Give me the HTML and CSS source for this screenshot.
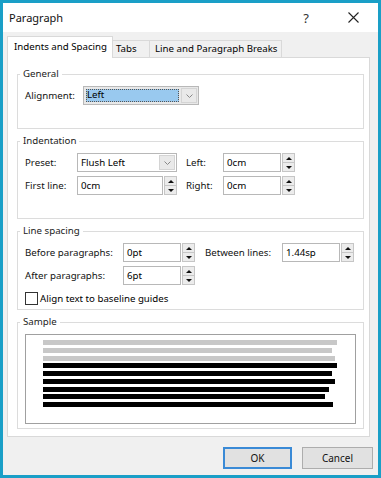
FILE: index.html
```html
<!DOCTYPE html>
<html>
<head>
<meta charset="utf-8">
<title>Paragraph</title>
<link rel="stylesheet" href="styles.css">
</head>
<body>
<div class="window">
  <div class="titlebar">
    <span class="title">Paragraph</span>
    <span class="help">?</span>
    <span class="close"><svg width="11" height="11" viewBox="0 0 11 11"><path d="M0.5 0.5L10.5 10.5M10.5 0.5L0.5 10.5" stroke="#222" stroke-width="1.1" fill="none"/></svg></span>
  </div>
  <div class="body">
    <div class="tabs">
      <div class="tab active">Indents and Spacing</div>
      <div class="tab tab-tabs">Tabs</div>
      <div class="tab tab-breaks">Line and Paragraph Breaks</div>
    </div>
    <div class="panel">
      <fieldset class="group">
        <legend>General</legend>
        <div class="gbody gen">
          <div class="row">
            <span class="lbl lbl-align">Alignment:</span>
            <div class="combo focused w-align">
              <span class="combo-text">Left</span>
              <span class="combo-btn"><svg width="7" height="4" viewBox="0 0 7 4"><path d="M0.5 0.5L3.5 3.5L6.5 0.5" stroke="#888" fill="none"/></svg></span>
            </div>
          </div>
        </div>
      </fieldset>

      <fieldset class="group">
        <legend>Indentation</legend>
        <div class="gbody ind">
          <div class="grid grid-ind">
            <span class="lbl">Preset:</span>
            <div class="combo w-preset">
              <span class="combo-text">Flush Left</span>
              <span class="combo-btn"><svg width="7" height="4" viewBox="0 0 7 4"><path d="M0.5 0.5L3.5 3.5L6.5 0.5" stroke="#888" fill="none"/></svg></span>
            </div>
            <span class="lbl">Left:</span>
            <div class="spinbox w-small">
              <span class="input">0cm</span>
              <span class="spin"><span class="up"></span><span class="down"></span></span>
            </div>
            <span class="lbl">First line:</span>
            <div class="spinbox w-preset">
              <span class="input">0cm</span>
              <span class="spin"><span class="up"></span><span class="down"></span></span>
            </div>
            <span class="lbl">Right:</span>
            <div class="spinbox w-small">
              <span class="input">0cm</span>
              <span class="spin"><span class="up"></span><span class="down"></span></span>
            </div>
          </div>
        </div>
      </fieldset>

      <fieldset class="group">
        <legend>Line spacing</legend>
        <div class="gbody ls">
          <div class="grid grid-ls">
            <span class="lbl">Before paragraphs:</span>
            <div class="spinbox w-small">
              <span class="input">0pt</span>
              <span class="spin"><span class="up"></span><span class="down"></span></span>
            </div>
            <span class="lbl">Between lines:</span>
            <div class="spinbox w-small">
              <span class="input">1.44sp</span>
              <span class="spin"><span class="up"></span><span class="down"></span></span>
            </div>
            <span class="lbl">After paragraphs:</span>
            <div class="spinbox w-small">
              <span class="input">6pt</span>
              <span class="spin"><span class="up"></span><span class="down"></span></span>
            </div>
          </div>
          <div class="check-row">
            <span class="checkbox"></span>
            <span class="check-label">Align text to baseline guides</span>
          </div>
        </div>
      </fieldset>

      <fieldset class="group">
        <legend>Sample</legend>
        <div class="gbody smp">
          <div class="sample">
            <div class="ln gray" style="width:294px"></div>
            <div class="ln gray" style="width:289px"></div>
            <div class="ln gray" style="width:292px"></div>
            <div class="ln dark" style="width:294px"></div>
            <div class="ln dark" style="width:289px"></div>
            <div class="ln dark" style="width:292px"></div>
            <div class="ln dark" style="width:286px"></div>
            <div class="ln dark" style="width:282px"></div>
            <div class="ln dark" style="width:290px"></div>
          </div>
        </div>
      </fieldset>
    </div>
    <div class="buttons">
      <button class="btn btn-ok">OK</button>
      <button class="btn btn-cancel">Cancel</button>
    </div>
  </div>
</div>
</body>
</html>
```

FILE: styles.css
```css
* { box-sizing: border-box; }
html, body { margin: 0; padding: 0; }
body {
  width: 381px;
  height: 478px;
  font-family: "Noto Sans", "Open Sans", sans-serif;
  font-size: 9.7px;
  color: #000;
  background: #fff;
}
.window {
  width: 381px;
  height: 478px;
  border: 3px solid #1a9fc7;
  display: flex;
  flex-direction: column;
  background: #f0f0f0;
}
.titlebar {
  height: 29px;
  flex: none;
  background: #fff;
  display: flex;
  align-items: center;
  padding-left: 6px;
}
.title { flex: 1; font-size: 11px; color: #111; }
.help { width: 20px; text-align: center; font-size: 13px; color: #333; margin-right: 22px; }
.close { width: 30px; display: flex; justify-content: center; margin-right: 10px; }

.body {
  flex: 1;
  display: flex;
  flex-direction: column;
  padding: 4px 8px 0 4px;
}
.tabs { display: flex; align-items: flex-end; height: 21px; flex: none; }
.tab {
  height: 17px;
  border: 1px solid #d9d9d9;
  border-bottom: none;
  background: #f0f0f0;
  line-height: 15px;
  white-space: nowrap;
}
.tab.active {
  position: relative;
  z-index: 1;
  width: 106px;
  height: 22px;
  margin-bottom: -1px;
  background: #fff;
  line-height: 19px;
  padding-left: 6px;
}
.tab-tabs { width: 37px; padding-left: 3px; border-left: none; }
.tab-breaks { width: 133px; padding-left: 5px; margin-left: -1px; }

.panel {
  height: 380px;
  flex: none;
  background: #fff;
  border: 1px solid #d9d9d9;
  padding: 9px 5px 8px 9px;
  display: flex;
  flex-direction: column;
  gap: 5px;
}
.group {
  margin: 0;
  padding: 0;
  border: 1px solid #dcdcdc;
  min-width: 0;
}
.group legend {
  margin-left: 2px;
  padding: 0 3px;
  height: 14px;
  line-height: 14px;
  color: #222;
}
.gbody { padding-left: 7px; }
.gen { padding-top: 5px; padding-bottom: 23px; }
.ind { padding-top: 5px; padding-bottom: 23px; }
.ls { padding-top: 5px; padding-bottom: 4px; }
.smp { padding-top: 5px; padding-bottom: 4px; }

.row { display: flex; align-items: center; height: 19px; }
.lbl { display: flex; align-items: center; height: 19px; white-space: nowrap; color: #111; }
.lbl-align { width: 58px; }

.grid { display: grid; row-gap: 4px; grid-auto-rows: 19px; }
.grid-ind { grid-template-columns: 52px 109px 37px 71px; }
.grid-ls { grid-template-columns: 98px 82px 77px 72px; }

.combo {
  display: flex;
  height: 19px;
  border: 1px solid #b8b8b8;
  background: #fff;
}
.w-align { width: 116px; }
.w-preset { width: 100px; }
.w-small { width: 72px; }
.combo-text { flex: 1; padding-left: 3px; line-height: 17px; }
.combo-btn {
  width: 16px;
  margin: 1px;
  background: #e9e9e9;
  border: 1px solid #d4d4d4;
  display: flex;
  align-items: center;
  justify-content: center;
}
.combo.focused { background: #e8e8e8; }
.combo.focused .combo-text {
  margin: 2px 1px 2px 2px;
  padding-left: 1px;
  line-height: 11px;
  background: #99c9ef;
  outline: 1px dotted #555;
  outline-offset: -1px;
}

.spinbox { display: flex; height: 19px; gap: 1px; }
.input {
  flex: 1;
  border: 1px solid #b8b8b8;
  background: #fff;
  padding-left: 3px;
  line-height: 17px;
}
.spin {
  width: 13px;
  display: flex;
  flex-direction: column;
  border: 1px solid #c6c6c6;
  background: #ececec;
}
.up, .down {
  flex: 1;
  display: flex;
  align-items: center;
  justify-content: center;
}
.down { border-top: 1px solid #c6c6c6; }
.up::after {
  content: "";
  border-left: 3px solid transparent;
  border-right: 3px solid transparent;
  border-bottom: 3px solid #111;
}
.down::after {
  content: "";
  border-left: 3px solid transparent;
  border-right: 3px solid transparent;
  border-top: 3px solid #111;
}

.check-row { display: flex; align-items: center; margin-top: 7px; height: 13px; }
.checkbox {
  width: 13px;
  height: 13px;
  border: 1px solid #333;
  background: #fff;
  margin-right: 2px;
}

.sample {
  width: 331px;
  height: 90px;
  border: 1px solid #a0a0a0;
  background: #fff;
  padding: 5px 0 0 17px;
}
.ln { height: 5px; margin-bottom: 2.75px; }
.ln.gray { background: #c8c8c8; }
.ln.dark { background: #000; }

.buttons {
  display: flex;
  justify-content: flex-end;
  gap: 10px;
  margin-top: 10px;
  margin-right: -3px;
}
.btn {
  height: 22px;
  font-family: inherit;
  font-size: 10px;
  color: #111;
  background: #e1e1e1;
  border: 1px solid #adadad;
  padding: 0;
}
.btn-ok { width: 69px; border: 2px solid #3a8ad6; }
.btn-cancel { width: 71px; }
```
